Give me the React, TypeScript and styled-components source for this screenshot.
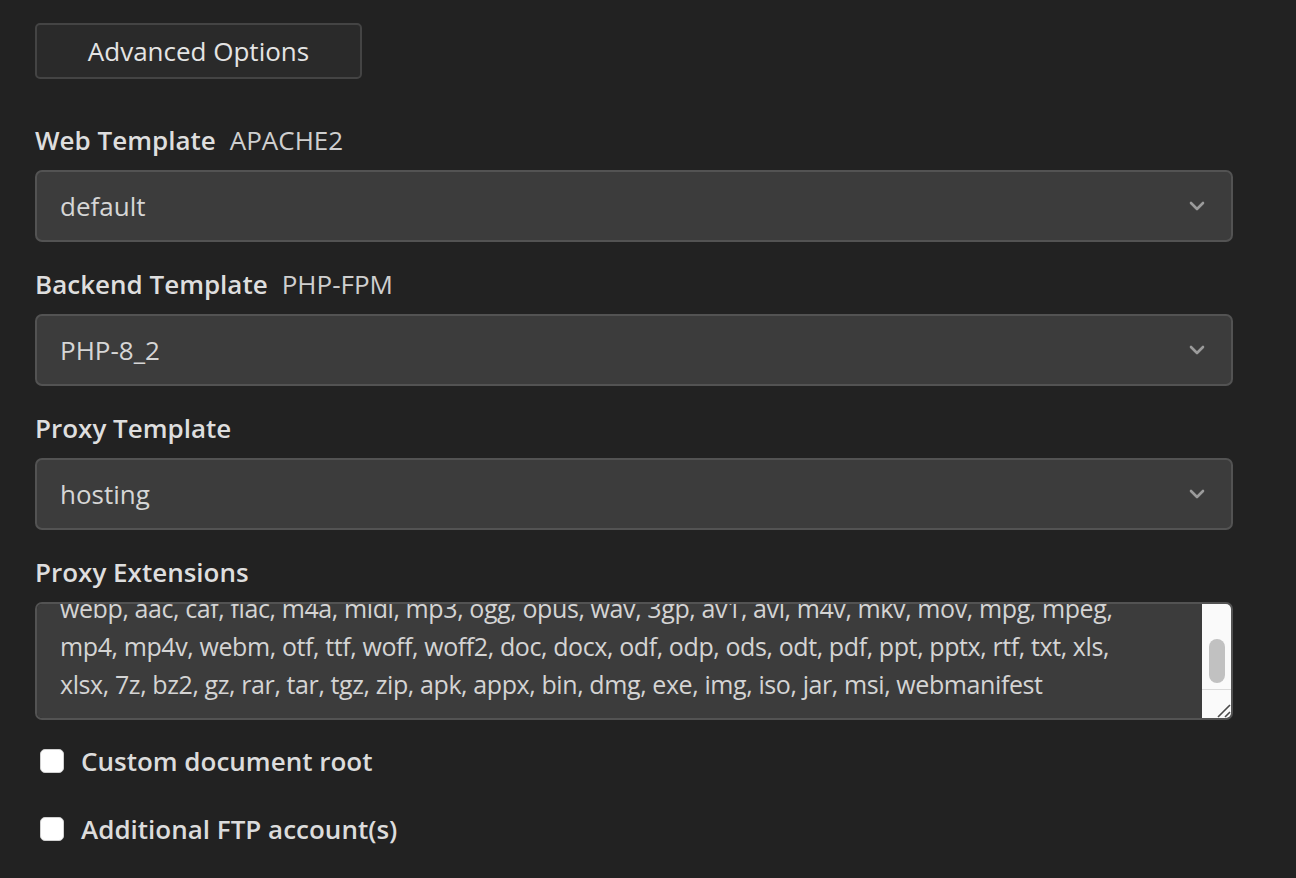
import React, { useEffect, useRef } from "react";
import styled, { createGlobalStyle } from "styled-components";

const GlobalStyle = createGlobalStyle`
  html, body { margin: 0; padding: 0; background: #222222; }
  body { font-family: "Open Sans", "Noto Sans", sans-serif; color: #dcdcdc; }
  * { box-sizing: border-box; }
`;

const Page = styled.div`
  width: 1296px;
  height: 878px;
  padding: 23px 63px 0 35px;
  display: flex;
  flex-direction: column;
`;

const AdvancedButton = styled.button`
  width: 327px;
  height: 56px;
  background: #2a2a2a;
  border: 2px solid #444444;
  border-radius: 5px;
  color: #e4e4e4;
  font-family: "Open Sans", sans-serif;
  font-size: 26px;
  font-weight: 400;
  cursor: pointer;
  padding: 0;
`;

const Group = styled.div<{ $first?: boolean }>`
  display: flex;
  flex-direction: column;
  margin-top: ${(p) => (p.$first ? "42px" : "23px")};
`;

const Label = styled.label`
  display: flex;
  align-items: baseline;
  gap: 14px;
  height: 38px;
  line-height: 38px;
  margin-bottom: 11px;
  font-size: 26px;
  font-weight: 600;
  color: #dedede;
`;

const Hint = styled.span`
  font-weight: 400;
  color: #cfcfcf;
`;

const FieldWrap = styled.div`
  position: relative;
  width: 100%;
`;

const Select = styled.select`
  appearance: none;
  width: 100%;
  height: 72px;
  padding: 15px 60px 15px 23px;
  background: #3c3c3c;
  border: 2px solid #535353;
  border-radius: 7px;
  color: #d6d6d6;
  font-family: "Open Sans", sans-serif;
  font-size: 26px;
  line-height: 38px;
  outline: none;
`;

const Chevron = styled.svg`
  position: absolute;
  right: 28px;
  top: 50%;
  margin-top: -5px;
  width: 16px;
  height: 10px;
  pointer-events: none;
`;

const TextArea = styled.textarea`
  display: block;
  width: 100%;
  height: 118px;
  padding: 15px 77px 15px 23px;
  background: #3c3c3c;
  border: 2px solid #535353;
  border-radius: 7px;
  color: #d4d4d4;
  font-family: "Open Sans", sans-serif;
  font-size: 25px;
  letter-spacing: -0.4px;
  line-height: 38px;
  resize: vertical;
  outline: none;
  overflow-y: scroll;
  scrollbar-width: none;
  &::-webkit-scrollbar {
    display: none;
  }
`;

const ScrollBar = styled.div`
  position: absolute;
  top: 2px;
  right: 2px;
  bottom: 2px;
  width: 29px;
  display: flex;
  flex-direction: column;
  background: #fafafa;
  border-radius: 0 5px 5px 0;
  pointer-events: none;
  overflow: hidden;
`;

const Track = styled.div`
  flex: 1;
  display: flex;
  flex-direction: column;
  justify-content: flex-end;
  align-items: center;
  padding-bottom: 6px;
`;

const Thumb = styled.div`
  width: 16px;
  height: 44px;
  border-radius: 8px;
  background: #c1c1c1;
`;

const Corner = styled.div`
  height: 29px;
  border-top: 1px solid #dadada;
  display: flex;
  align-items: flex-end;
  justify-content: flex-end;
`;

const CheckRow = styled.label<{ $first?: boolean }>`
  display: flex;
  align-items: center;
  gap: 17px;
  height: 38px;
  margin-top: ${(p) => (p.$first ? "22px" : "30px")};
  padding-left: 5px;
  font-size: 26px;
  font-weight: 600;
  color: #dcdcdc;
  cursor: pointer;
`;

const Check = styled.input`
  appearance: none;
  width: 24px;
  height: 24px;
  margin: 0;
  background: #ffffff;
  border: 1px solid #d0d0d0;
  border-radius: 5px;
`;

const EXTENSIONS =
  "css, htm, html, js, json, xml, apng, avif, bmp, cur, gif, ico, jfif, jpg, jpeg, pjp, pjpeg, png, svg, tif, tiff, webp, aac, caf, flac, m4a, midi, mp3, ogg, opus, wav, 3gp, av1, avi, m4v, mkv, mov, mpg, mpeg, mp4, mp4v, webm, otf, ttf, woff, woff2, doc, docx, odf, odp, ods, odt, pdf, ppt, pptx, rtf, txt, xls, xlsx, 7z, bz2, gz, rar, tar, tgz, zip, apk, appx, bin, dmg, exe, img, iso, jar, msi, webmanifest";

const ChevronIcon = () => (
  <Chevron viewBox="0 0 16 10">
    <path d="M2 2 L8 8 L14 2" fill="none" stroke="#9b9b9b" strokeWidth="2.6" strokeLinecap="round" strokeLinejoin="round" />
  </Chevron>
);

const SelectField = ({ id, options, value }: { id: string; options: string[]; value: string }) => (
  <FieldWrap>
    <Select id={id} defaultValue={value}>
      {options.map((o) => (
        <option key={o} value={o}>
          {o}
        </option>
      ))}
    </Select>
    <ChevronIcon />
  </FieldWrap>
);

export default function App() {
  const taRef = useRef<HTMLTextAreaElement>(null);
  useEffect(() => {
    if (taRef.current) taRef.current.scrollTop = taRef.current.scrollHeight;
  }, []);

  return (
    <>
      <GlobalStyle />
      <Page>
        <AdvancedButton type="button">Advanced Options</AdvancedButton>

        <Group $first>
          <Label htmlFor="web">
            Web Template <Hint>APACHE2</Hint>
          </Label>
          <SelectField id="web" options={["default", "hosting", "basedir"]} value="default" />
        </Group>

        <Group>
          <Label htmlFor="backend">
            Backend Template <Hint>PHP-FPM</Hint>
          </Label>
          <SelectField id="backend" options={["default", "PHP-8_1", "PHP-8_2", "PHP-8_3"]} value="PHP-8_2" />
        </Group>

        <Group>
          <Label htmlFor="proxy">Proxy Template</Label>
          <SelectField id="proxy" options={["default", "hosting", "caching"]} value="hosting" />
        </Group>

        <Group>
          <Label htmlFor="ext">Proxy Extensions</Label>
          <FieldWrap>
            <TextArea id="ext" ref={taRef} defaultValue={EXTENSIONS} />
            <ScrollBar>
              <Track>
                <Thumb />
              </Track>
              <Corner>
                <svg width="16" height="16" viewBox="0 0 16 16">
                  <path d="M3 15 L15 3 M10 15 L15 10" stroke="#4a4a4a" strokeWidth="1.6" fill="none" />
                </svg>
              </Corner>
            </ScrollBar>
          </FieldWrap>
        </Group>

        <CheckRow $first>
          <Check type="checkbox" />
          Custom document root
        </CheckRow>
        <CheckRow>
          <Check type="checkbox" />
          Additional FTP account(s)
        </CheckRow>
      </Page>
    </>
  );
}
